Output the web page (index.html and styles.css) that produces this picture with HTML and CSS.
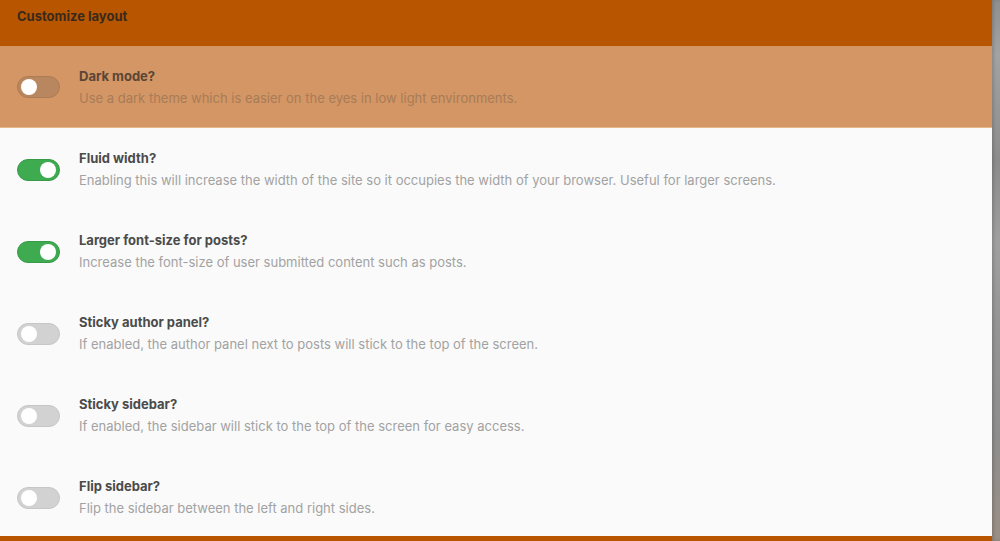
FILE: index.html
```html
<!DOCTYPE html>
<html>
<head>
    <title>Customize layout</title>
    <link rel="stylesheet" href="styles.css">
</head>
<body>
    <div class="page">
        <div class="panel">
            <div class="panel-header">Customize layout</div>
            <div class="option option-hover">
                <span class="toggle"></span>
                <div class="option-text">
                    <div class="option-title">Dark mode?</div>
                    <div class="option-desc">Use a dark theme which is easier on the eyes in low light environments.</div>
                </div>
            </div>
            <div class="option">
                <span class="toggle on"></span>
                <div class="option-text">
                    <div class="option-title">Fluid width?</div>
                    <div class="option-desc">Enabling this will increase the width of the site so it occupies the width of your browser. Useful for larger screens.</div>
                </div>
            </div>
            <div class="option">
                <span class="toggle on"></span>
                <div class="option-text">
                    <div class="option-title">Larger font-size for posts?</div>
                    <div class="option-desc">Increase the font-size of user submitted content such as posts.</div>
                </div>
            </div>
            <div class="option">
                <span class="toggle"></span>
                <div class="option-text">
                    <div class="option-title">Sticky author panel?</div>
                    <div class="option-desc">If enabled, the author panel next to posts will stick to the top of the screen.</div>
                </div>
            </div>
            <div class="option">
                <span class="toggle"></span>
                <div class="option-text">
                    <div class="option-title">Sticky sidebar?</div>
                    <div class="option-desc">If enabled, the sidebar will stick to the top of the screen for easy access.</div>
                </div>
            </div>
            <div class="option">
                <span class="toggle"></span>
                <div class="option-text">
                    <div class="option-title">Flip sidebar?</div>
                    <div class="option-desc">Flip the sidebar between the left and right sides.</div>
                </div>
            </div>
            <div class="panel-footer"></div>
        </div>
        <div class="backdrop"></div>
    </div>
</body>
</html>
```

FILE: styles.css
```css
html, body {
    margin: 0;
    padding: 0;
}

body {
    font-family: Inter, "Noto Sans", sans-serif;
    background: #fafafa;
    overflow: hidden;
}

.page {
    display: flex;
    height: 541px;
}

.panel {
    width: 992px;
    display: flex;
    flex-direction: column;
    background: #fafafa;
}

.backdrop {
    flex: 1;
    background: linear-gradient(to bottom, #8f8f8f 0%, #a3a3a3 10%, #8c8c8c 30%, #a0a0a0 45%, #959595 60%, #8e8e8e 80%, #9a8f86 100%);
    box-shadow: inset 2px 0 3px rgba(0, 0, 0, 0.15);
}

.panel-header {
    height: 46px;
    box-sizing: border-box;
    padding: 8px 17px 0;
    background: #b85500;
    color: #3a2a1c;
    font-size: 13px;
    font-weight: 700;
}

.option {
    height: 82px;
    box-sizing: border-box;
    display: flex;
    align-items: center;
    gap: 19px;
    padding: 0 17px;
}

.option-hover {
    background: #d49664;
    border-bottom: 1px solid #e6b68c;
}

.toggle {
    position: relative;
    flex: none;
    width: 43px;
    height: 22px;
    border-radius: 11px;
    background: #d2d2d2;
    box-sizing: border-box;
    border: 1px solid #c6c6c6;
    margin-top: 1px;
}

.toggle::after {
    content: "";
    position: absolute;
    top: 2px;
    left: 3px;
    width: 16px;
    height: 16px;
    border-radius: 50%;
    background: #fff;
}

.option-hover .toggle {
    background: #b8875f;
    border-color: #ae7c52;
}

.toggle.on {
    background: #3eab50;
    border-color: #379a47;
}

.toggle.on::after {
    left: auto;
    right: 3px;
}

.option-text {
    display: flex;
    flex-direction: column;
    gap: 6px;
}

.option-title {
    font-size: 13px;
    font-weight: 700;
    color: #4b4b4b;
}

.option-desc {
    font-size: 13px;
    color: #a2a2a2;
}

.option-hover .option-desc {
    color: #a77c58;
}

.option-hover .option-title {
    color: #5a4636;
}

.panel-footer {
    flex: 1;
    margin-top: -2px;
    background: #b85500;
}
```
